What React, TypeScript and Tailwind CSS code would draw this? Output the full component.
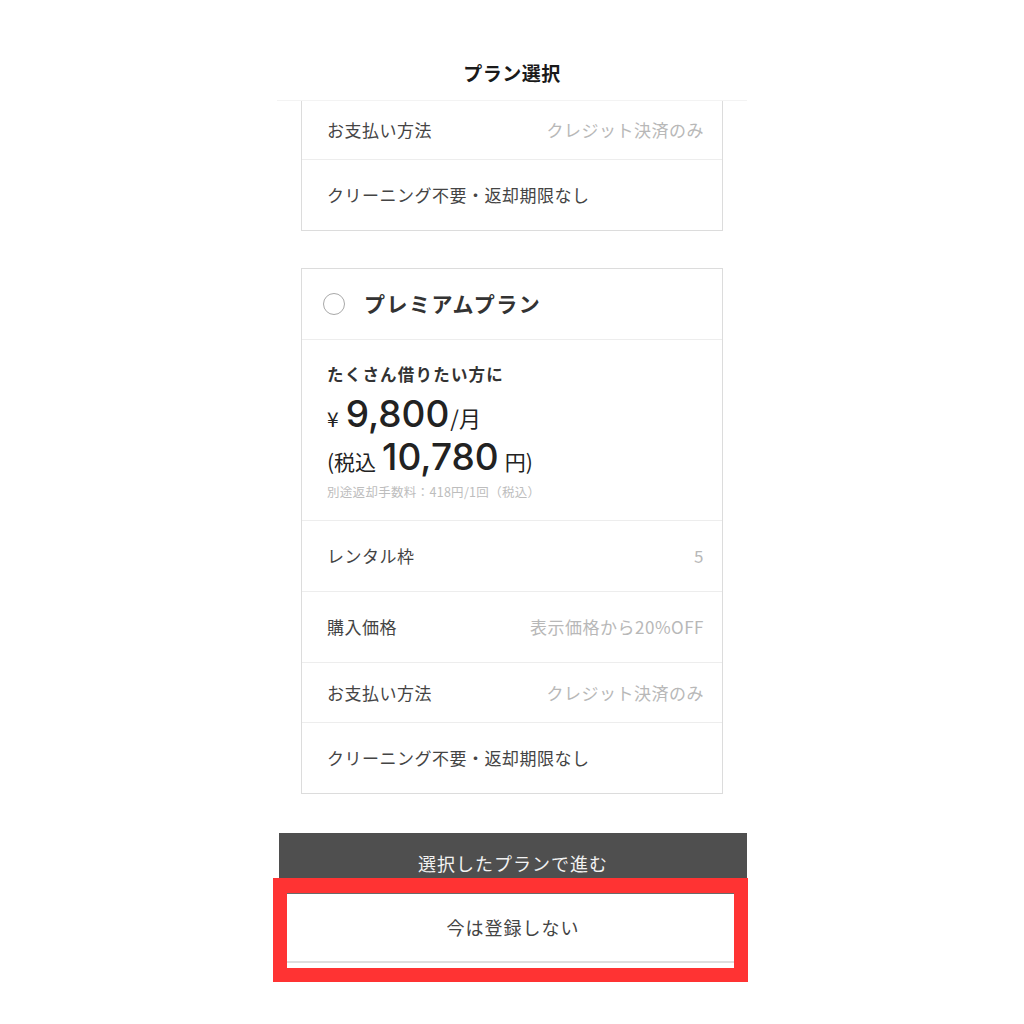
import React from "react";

const jp = "font-['Noto_Sans_CJK_JP',sans-serif]";
const num = "font-['Inter','Noto_Sans_CJK_JP',sans-serif]";

const premiumRows = [
    { label: "レンタル枠", value: "5", h: "h-[71px]" },
    { label: "購入価格", value: "表示価格から20%OFF", h: "h-[71px]" },
    { label: "お支払い方法", value: "クレジット決済のみ", h: "h-[60px]" },
    { label: "クリーニング不要・返却期限なし", value: "", h: "h-[70px]" },
];

function Row({ label, value, h, last }: { label: string; value: string; h: string; last?: boolean }) {
    return (
        <div
            className={`${h} flex items-center justify-between pl-[25px] pr-[18px] tracking-[0.5px] ${last ? "" : "border-b border-[#ededed]"
                }`}
        >
            <span className="text-[17px] text-[#444]">{label}</span>
            {value && <span className="text-[17px] text-[#b8b8b8]">{value}</span>}
        </div>
    );
}

export default function App() {
    return (
        <div className={`min-h-[1024px] bg-white flex justify-center ${jp}`}>
            <div className="w-[470px]">
                {/* Header */}
                <div className="h-[101px] pt-[60px] text-center border-b border-[#f3f3f3]">
                    <h1 className="text-[19px] leading-[26px] font-bold text-[#1a1a1a] tracking-[0.5px]">プラン選択</h1>
                </div>

                {/* Previous card (scrolled) */}
                <div className="mx-[24px] border-x border-b border-[#dcdcdc]">
                    <Row label="お支払い方法" value="クレジット決済のみ" h="h-[59px]" />
                    <Row label="クリーニング不要・返却期限なし" value="" h="h-[70px]" last />
                </div>

                {/* Premium plan */}
                <div className="mx-[24px] mt-[37px] border border-[#dcdcdc]">
                    <div className="h-[71px] flex items-center gap-[19px] pl-[21px] border-b border-[#ededed]">
                        <div className="w-[22px] h-[22px] rounded-full border border-[#a8a8a8]" />
                        <span className="text-[21px] font-bold text-[#333] tracking-[1.5px]">プレミアムプラン</span>
                    </div>
                    <div className="h-[181px] pl-[25px] pt-[22px] border-b border-[#ededed]">
                        <p className="text-[16.5px] leading-[24px] font-bold text-[#333] tracking-[1.2px]">たくさん借りたい方に</p>
                        <div className="h-[44px] mt-[6px] flex items-baseline text-[#222]">
                            <span className="text-[21px] mr-[7px]">¥</span>
                            <span className={`${num} text-[37px] font-medium leading-[44px]`}>9,800</span>
                            <span className="text-[22px] ml-[1px]">/月</span>
                        </div>
                        <div className="h-[40px] mt-[1px] flex items-baseline text-[#222]">
                            <span className="text-[21px]">(税込</span>
                            <span className={`${num} text-[37px] font-medium leading-[40px] mx-[6px]`}>10,780</span>
                            <span className="text-[21px]">円)</span>
                        </div>
                        <p className="text-[12.5px] leading-[18px] mt-[6px] text-[#bdbdbd] tracking-[0.3px]">
                            別途返却手数料：418円/1回（税込）
                        </p>
                    </div>
                    {premiumRows.map((r, i) => (
                        <Row key={r.label} label={r.label} value={r.value} h={r.h} last={i === premiumRows.length - 1} />
                    ))}
                </div>

                {/* Buttons */}
                <div className="relative mt-[39px] ml-[2px]">
                    <button className="w-full h-[60px] bg-[#4f4f4f] text-[18px] tracking-[1px] text-[#f2f2f2]">
                        選択したプランで進む
                    </button>
                    <button className="w-full h-[70px] bg-white border-t border-[#6a6a6a] border-b-2 border-b-[#dedede] text-[18px] tracking-[1px] text-[#444]">
                        今は登録しない
                    </button>
                    <div className="absolute left-[-6px] top-[45px] w-[475px] h-[104px] border-[14px] border-t-[15px] border-[#ff3333]" />
                </div>
            </div>
        </div>
    );
}
